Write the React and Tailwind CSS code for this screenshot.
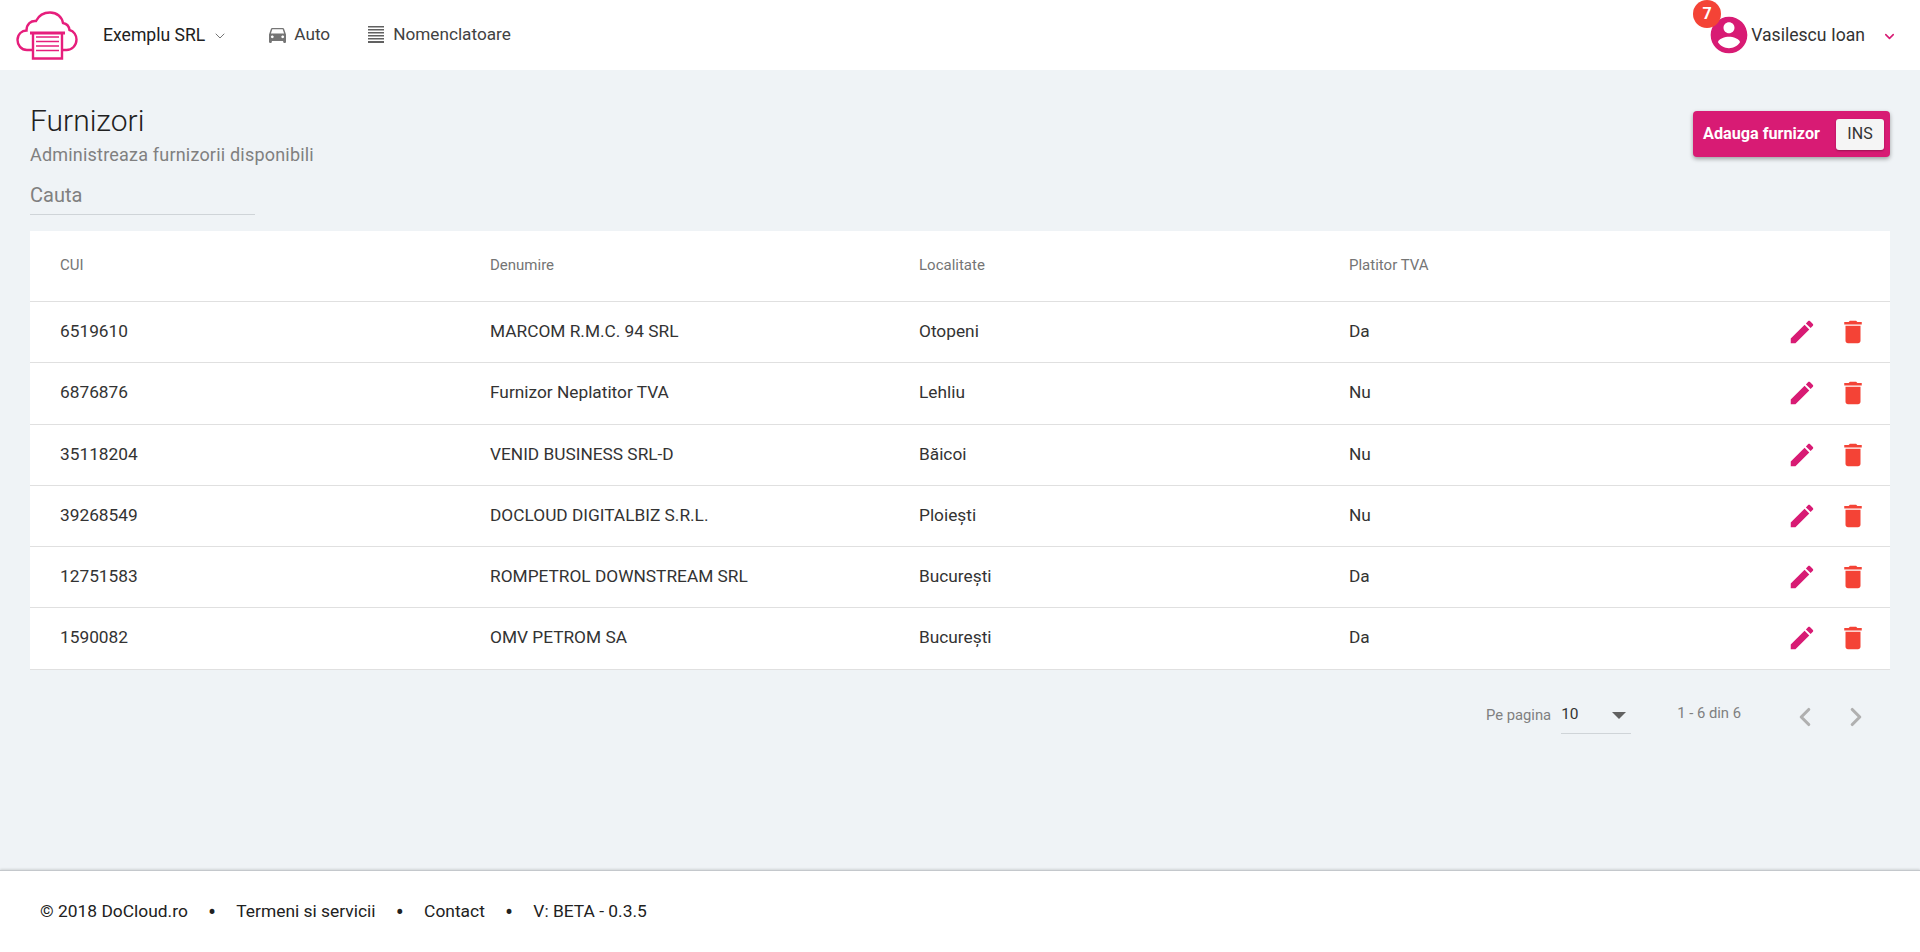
import React from 'react';
import { ChevronDown, ChevronLeft, ChevronRight } from 'lucide-react';

const PINK = '#d81b74';

const furnizori = [
	{ cui: '6519610', nume: 'MARCOM R.M.C. 94 SRL', loc: 'Otopeni', tva: 'Da' },
	{ cui: '6876876', nume: 'Furnizor Neplatitor TVA', loc: 'Lehliu', tva: 'Nu' },
	{ cui: '35118204', nume: 'VENID BUSINESS SRL-D', loc: 'Băicoi', tva: 'Nu' },
	{ cui: '39268549', nume: 'DOCLOUD DIGITALBIZ S.R.L.', loc: 'Ploiești', tva: 'Nu' },
	{ cui: '12751583', nume: 'ROMPETROL DOWNSTREAM SRL', loc: 'București', tva: 'Da' },
	{ cui: '1590082', nume: 'OMV PETROM SA', loc: 'București', tva: 'Da' },
];

const Logo = () => (
	<svg width="62" height="50" viewBox="0 0 62 50" fill="none" stroke="#e61e7c" strokeWidth="2.4">
		<path d="M16 39H11C5 39 1.5 34 1.5 29C1.5 23 6 19.5 10.5 19.5C10.5 13 15 9.5 20 10C23 4 29 1.5 34 1.5C41 1.5 46 6 47 12C50 12.500 53 15 53.500 19C58 20 60.500 24.500 60.500 28.500C60.500 34.500 56 39 50.500 39H46" />
		<path d="M17 22V47.500H46V22" />
		<path d="M14 22H49" strokeWidth="3" />
		<path d="M20 26H43M20 30.500H43M20 35H43M20 39.500H43" strokeWidth="1.600" />
	</svg>
);

const CarIcon = () => (
	<svg width="17" height="17" viewBox="3 3 18 18" fill="#757575">
		<path d="M18.92 6.010C18.720 5.420 18.160 5 17.500 5h-11c-.66 0-1.210.42-1.420 1.010L3 12v8c0 .55.45 1 1 1h1c.55 0 1-.45 1-1v-1h12v1c0 .55.45 1 1 1h1c.55 0 1-.45 1-1v-8l-2.080-5.990zM6.500 16c-.83 0-1.500-.67-1.500-1.500S5.670 13 6.500 13s1.500.67 1.500 1.500S7.330 16 6.500 16zm11 0c-.83 0-1.500-.67-1.500-1.500s.67-1.500 1.500-1.500 1.500.67 1.500 1.500-.67 1.500-1.500 1.500zM5 11l1.500-4.500h11L19 11H5z" />
	</svg>
);

const LinesIcon = () => (
	<svg width="16" height="17" viewBox="0 0 16 17" fill="#616161">
		<path d="M0 0h16v1.500H0zM0 3h16v1.500H0zM0 6h16v1.500H0zM0 9h16v1.500H0zM0 12h16v1.500H0zM0 15h16v2H0z" />
	</svg>
);

const PencilIcon = () => (
	<svg width="30" height="30" viewBox="0 0 24 24" fill={PINK}>
		<path d="M3 17.250V21h3.750L17.810 9.940l-3.750-3.750L3 17.250zM20.710 7.040c.39-.39.39-1.020 0-1.410l-2.340-2.340c-.39-.39-1.020-.39-1.410 0l-1.830 1.830 3.750 3.750 1.830-1.830z" />
	</svg>
);

const TrashIcon = () => (
	<svg width="30" height="30" viewBox="0 0 24 24" fill="#f44336">
		<path d="M6 19c0 1.100.9 2 2 2h8c1.100 0 2-.9 2-2V7H6v12zM19 4h-3.500l-1-1h-5l-1 1H5v2h14V4z" />
	</svg>
);

const AccountIcon = () => (
	<svg width="44" height="44" viewBox="0 0 24 24" fill={PINK}>
		<path d="M12 2C6.480 2 2 6.480 2 12s4.480 10 10 10 10-4.480 10-10S17.520 2 12 2zm0 3c1.660 0 3 1.340 3 3s-1.340 3-3 3-3-1.340-3-3 1.340-3 3-3zm0 14.200c-2.500 0-4.710-1.280-6-3.220.03-1.990 4-3.080 6-3.080 1.990 0 5.970 1.090 6 3.080-1.290 1.940-3.500 3.220-6 3.220z" />
	</svg>
);

function Header() {
	return (
		<header className="h-[70px] bg-white flex items-center shrink-0">
			<div className="ml-[16px] mt-[2px] flex"><Logo /></div>
			<div className="ml-[25px] flex items-center text-[17.600px] text-[#212121]">
				Exemplu SRL
				<ChevronDown size={16} strokeWidth={1.5} color="#757575" className="ml-[7px] mt-[2px]" />
			</div>
			<div className="ml-[41px] flex items-center text-[17.200px] text-[#424242]">
				<CarIcon />
				<span className="ml-[8px]">Auto</span>
			</div>
			<div className="ml-[38px] flex items-center text-[17.200px] text-[#424242]">
				<LinesIcon />
				<span className="ml-[9px]">Nomenclatoare</span>
			</div>
			<div className="ml-auto mr-[23px] flex items-center text-[17.600px] text-[#333333]">
				<div className="relative flex">
					<AccountIcon />
					<span className="absolute left-[-14px] top-[-13px] w-[28px] h-[28px] rounded-full bg-[#f44336] text-white text-[16px] font-bold flex items-center justify-center">7</span>
				</div>
				<span>Vasilescu Ioan</span>
				<ChevronDown size={15} strokeWidth={2.5} color={PINK} className="ml-[17px] mt-[2px]" />
			</div>
		</header>
	);
}

function TableRow({ r }) {
	return (
		<div className="grid grid-cols-[430px_429px_430px_1fr] h-[61.250px] items-center border-b border-[#e0e0e0] text-[17.300px] text-[#333333] pl-[30px]">
			<div>{r.cui}</div>
			<div>{r.nume}</div>
			<div>{r.loc}</div>
			<div className="flex items-center justify-between">
				<span>{r.tva}</span>
				<div className="flex items-center gap-[21px] mr-[22px]">
					<PencilIcon />
					<TrashIcon />
				</div>
			</div>
		</div>
	);
}

export default function App() {
	return (
		<div className="min-h-screen flex flex-col bg-[#eff3f6] font-['Roboto',sans-serif]">
			<Header />
			<main className="flex-1 px-[30px] pt-[31px]">
				<div className="flex justify-between items-start">
					<div>
						<h1 className="text-[30px] leading-[40px] font-light text-[#212121]">Furnizori</h1>
						<p className="mt-[2px] text-[18px] leading-[24px] text-[#808080] tracking-[0.2px]">Administreaza furnizorii disponibili</p>
						<div className="mt-[16px] w-[225px] border-b border-[#cfd4d8] pb-[7px] text-[20px] leading-[24px] text-[#808080]">Cauta</div>
					</div>
					<button className="mt-[10px] w-[197px] h-[46px] pl-[10px] pr-[6px] rounded-[4px] bg-[#d81b74] shadow-[0_2px_4px_rgba(0,0,0,0.35)] flex items-center justify-between">
						<span className="text-white font-bold text-[16.200px]">Adauga furnizor</span>
						<span className="w-[48px] h-[31px] rounded-[3px] bg-[#f5f5f5] flex items-center justify-center text-[16px] text-[#333333] shadow-[0_1px_2px_rgba(0,0,0,0.3)]">INS</span>
					</button>
				</div>
				<section className="mt-[16px] bg-white">
					<div className="grid grid-cols-[430px_429px_430px_1fr] h-[71px] pb-[2px] items-center border-b border-[#e0e0e0] text-[15px] text-[#757575] pl-[30px]">
						<div>CUI</div>
						<div>Denumire</div>
						<div>Localitate</div>
						<div>Platitor TVA</div>
					</div>
					{furnizori.map(r => <TableRow key={r.cui} r={r} />)}
				</section>
				<div className="mt-[24px] flex items-center justify-end h-[40px] text-[14.800px] text-[#808080]">
					<span className="mt-[4px]">Pe pagina</span>
					<div className="ml-[10px] w-[70px] h-[40px] border-b border-[#cfd4d8] flex items-center justify-between pr-[5px] pt-[4px] text-[#333333] text-[15.500px]">
						<span>10</span>
						<span className="w-0 h-0 border-x-[7px] border-x-transparent border-t-[7px] border-t-[#616161]"></span>
					</div>
					<span className="ml-[46px] mb-[1px]">1 - 6 din 6</span>
					<ChevronLeft size={30} strokeWidth={2.5} color="#b0b0b0" className="ml-[49px] mt-[6px]" />
					<ChevronRight size={30} strokeWidth={2.5} color="#b0b0b0" className="ml-[21px] mr-[19px] mt-[6px]" />
				</div>
			</main>
			<footer className="h-[82px] bg-white shrink-0 border-t border-[#c4c8cc] shadow-[0_-1px_2px_rgba(0,0,0,0.12)] flex items-center pl-[40px] text-[17.400px] text-[#212121]">
				<span>© 2018 DoCloud.ro</span>
				<span className="w-[48.500px] text-center text-[24px] leading-none">•</span>
				<span>Termeni si servicii</span>
				<span className="w-[48.500px] text-center text-[24px] leading-none">•</span>
				<span>Contact</span>
				<span className="w-[48.500px] text-center text-[24px] leading-none">•</span>
				<span>V: BETA - 0.3.5</span>
			</footer>
		</div>
	);
}
